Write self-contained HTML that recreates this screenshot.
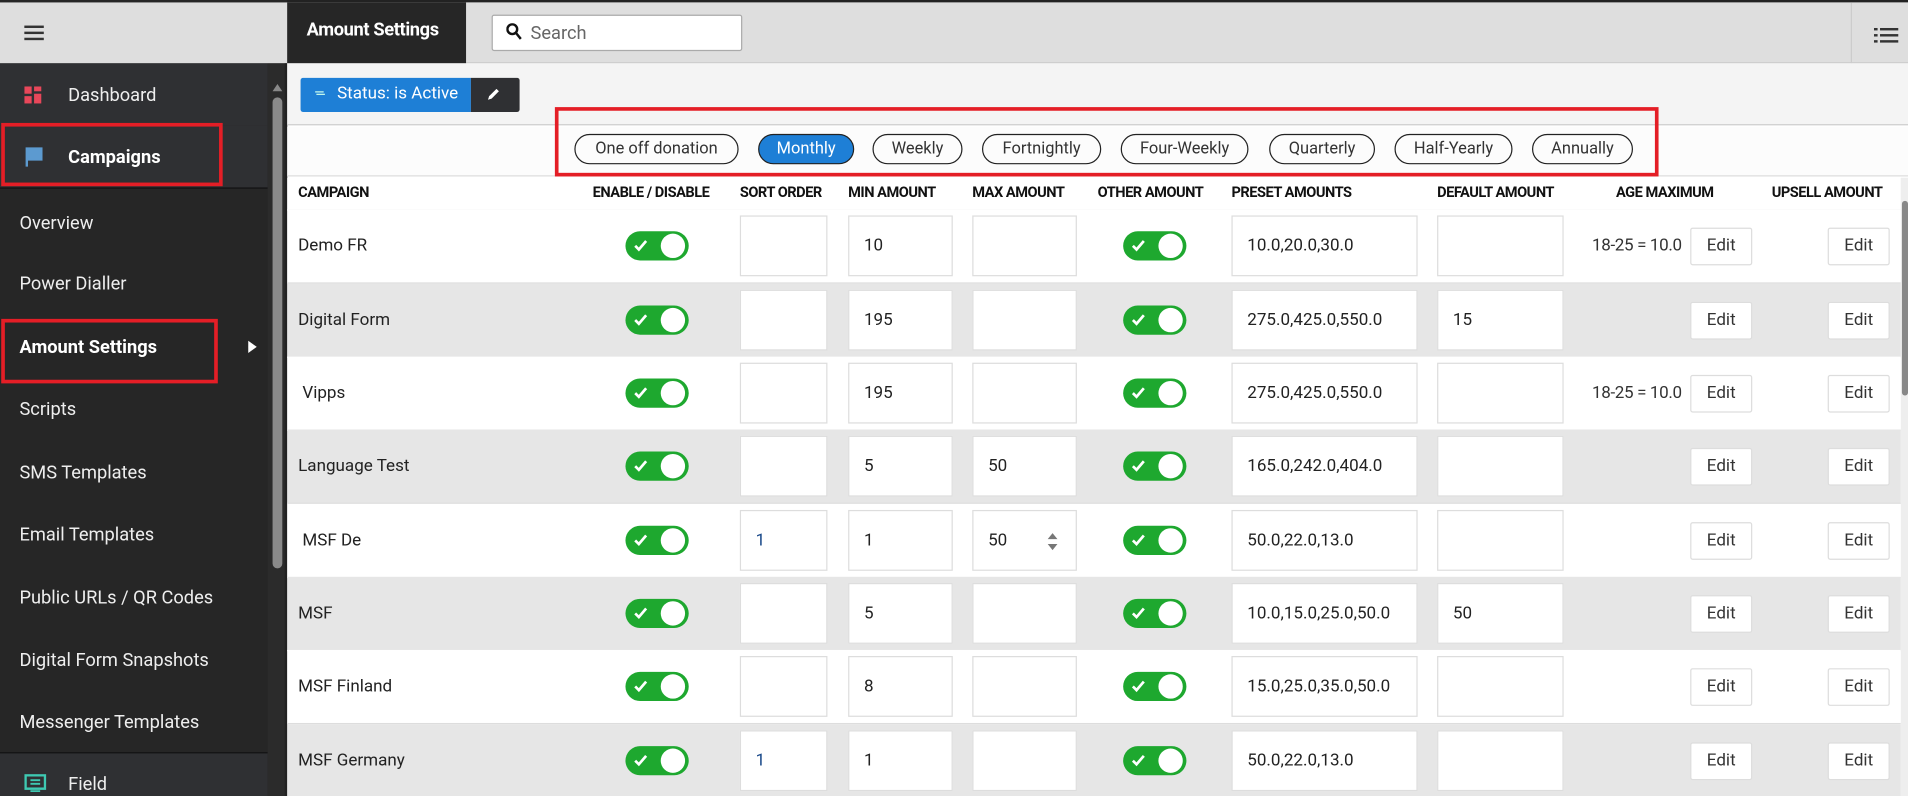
<!DOCTYPE html>
<html><head><meta charset="utf-8"><style>
*{box-sizing:border-box;margin:0;padding:0}
html,body{width:1908px;height:796px;overflow:hidden;background:#fff}
#w{position:absolute;left:0;top:0;width:1568px;height:654px;transform:scale(1.21684,1.2171);transform-origin:0 0;font-family:"Roboto","Liberation Sans",sans-serif;overflow:hidden}
.a{position:absolute}
.side{left:0;top:0;width:236px;height:654px;background:#262626}
.si{position:absolute;left:0;width:220px;color:#eee;font-size:15px;padding-left:16px;display:flex;align-items:center;height:51px}
.hd{font-size:12px;font-weight:bold;color:#111;top:151px;position:absolute;letter-spacing:-0.4px}
.row{position:absolute;left:236px;width:1326px;height:61px;border-bottom:1px solid #ddd}
.row>*{position:absolute}
.nm{left:9px;top:0;line-height:60px;font-size:14px;color:#222}
.tg{width:52px;height:24px;top:18px;background:#1ea82f;border-radius:12px}
.tg:after{content:"";position:absolute;right:3px;top:2px;width:20px;height:20px;border-radius:50%;background:#fff}
.tg svg{position:absolute;left:7px;top:6px}
.in{top:5px;height:50px;background:#fff;border:1px solid #ddd;font-size:14px;color:#222;padding-left:12px;line-height:48px}
.ed{top:15px;height:31px;width:51px;background:#fff;border:1px solid #ddd;border-radius:2px;font-size:14px;color:#333;text-align:center;line-height:29px}
.ag{right:180px;top:0;line-height:60px;font-size:14px;color:#333;letter-spacing:-0.3px}
.pill{position:absolute;top:110px;height:25px;border:1px solid #222;border-radius:13px;font-size:13.5px;color:#333;line-height:23px;text-align:center}
</style></head><body><div id="w">
<div class="a" style="left:0;top:0;width:1568px;height:2px;background:#222"></div>
<div class="a side"></div>
<div class="a" style="left:0;top:2px;width:236px;height:50px;background:#dedede"></div>
<div class="a" style="left:20px;top:21px;width:16px;height:2px;background:#333;box-shadow:0 5px 0 #333,0 10px 0 #333"></div>
<div class="si" style="top:52px;background:#2f3033"><svg class="a" style="left:20px;top:19px" width="14" height="14"><rect x="0" y="0" width="6" height="6" fill="#e8475a"/><rect x="8" y="0" width="6" height="4" fill="#e8475a"/><rect x="0" y="8" width="6" height="6" fill="#e8475a"/><rect x="8" y="6" width="6" height="8" fill="#e8475a"/></svg><span style="margin-left:40px">Dashboard</span></div>
<div class="si" style="top:103px;height:52px;background:#2f3033;border-bottom:1px solid #111"><svg class="a" style="left:21px;top:18px" width="14" height="16"><path d="M1 0v16M1 1h12v9H1" fill="#5c9ad0" stroke="#5c9ad0" stroke-width="2"/></svg><b style="margin-left:40px;color:#fff">Campaigns</b></div>
<div class="si" style="top:157px">Overview</div>
<div class="si" style="top:207px">Power Dialler</div>
<div class="si" style="top:259px;font-weight:bold;color:#fff">Amount Settings</div>
<div class="a" style="left:204px;top:280px;border-left:7px solid #fff;border-top:5px solid transparent;border-bottom:5px solid transparent"></div>
<div class="si" style="top:310px">Scripts</div>
<div class="si" style="top:362px">SMS Templates</div>
<div class="si" style="top:413px">Email Templates</div>
<div class="si" style="top:465px">Public URLs / QR Codes</div>
<div class="si" style="top:516px">Digital Form Snapshots</div>
<div class="si" style="top:567px">Messenger Templates</div>
<div class="si" style="top:618px;height:36px;background:#2f3033;border-top:1px solid #111;align-items:flex-start;padding-top:16px"><svg class="a" style="left:20px;top:17px" width="18" height="16"><rect x="1" y="1" width="16" height="11" fill="none" stroke="#3ec9b2" stroke-width="2"/><path d="M5 5h8M5 8h8M5 14h8" stroke="#3ec9b2" stroke-width="1.5"/></svg><span style="margin-left:40px">Field</span></div>
<div class="a" style="left:220px;top:52px;width:16px;height:602px;background:#2b2b2b"></div>
<div class="a" style="left:224px;top:69px;border-bottom:6px solid #888;border-left:4px solid transparent;border-right:4px solid transparent"></div>
<div class="a" style="left:224px;top:80px;width:8px;height:387px;background:#8a8a8a;border-radius:4px"></div>
<div class="a" style="left:234px;top:52px;width:2px;height:602px;background:#222"></div>
<div class="a" style="left:1px;top:101px;width:182px;height:52px;border:3px solid #e41e26"></div>
<div class="a" style="left:1px;top:262px;width:178px;height:53px;border:3px solid #e41e26"></div>
<!-- header -->
<div class="a" style="left:236px;top:2px;width:1332px;height:50px;background:#dedede;border-bottom:1px solid #ccc"></div>
<div class="a" style="left:236px;top:2px;width:147px;height:50px;background:#262626;color:#fff;font-weight:bold;font-size:15px;line-height:44px;padding-left:16px;letter-spacing:-0.3px">Amount Settings</div>
<div class="a" style="left:404px;top:12px;width:206px;height:30px;background:#fff;border:1px solid #aaa;border-radius:2px;font-size:15px;color:#666;line-height:28px;padding-left:31px">Search</div>
<svg class="a" style="left:416px;top:19px" width="13" height="14"><circle cx="5" cy="5" r="4" fill="none" stroke="#111" stroke-width="2"/><path d="M8 8l4 5" stroke="#111" stroke-width="2"/></svg>
<div class="a" style="left:1521px;top:2px;width:1px;height:50px;background:#ccc"></div>
<svg class="a" style="left:1540px;top:22px" width="22" height="14"><g fill="#333"><rect x="0" y="1" width="3" height="2"/><rect x="5" y="1" width="15" height="2"/><rect x="0" y="6" width="3" height="2"/><rect x="5" y="6" width="15" height="2"/><rect x="0" y="11" width="3" height="2"/><rect x="5" y="11" width="15" height="2"/></g></svg>
<div class="a" style="left:236px;top:52px;width:1332px;height:51px;background:#f4f4f4;border-bottom:1px solid #ccc"></div>
<div class="a" style="left:247px;top:64px;width:140px;height:28px;background:#1e7fd6;border-radius:2px 0 0 2px;color:#fff;font-size:14px;line-height:26px;padding-left:30px">Status: is Active</div>
<div class="a" style="left:259px;top:75px;width:7px;height:1px;background:#cfe;box-shadow:1px 2px 0 #cfe"></div>
<div class="a" style="left:387px;top:64px;width:40px;height:28px;background:#2f3033;border-radius:0 2px 2px 0"></div>
<svg class="a" style="left:400px;top:71px" width="12" height="12"><path d="M1 11l1-3 6-6 2 2-6 6z" fill="#fff"/></svg>
<div class="a" style="left:236px;top:104px;width:1332px;height:41px;background:#fcfcfc;border-bottom:1px solid #ddd"></div>
<div class="pill" style="left:472px;width:135px">One off donation</div>
<div class="pill" style="left:623px;width:79px;background:#1e7fd6;color:#fff">Monthly</div>
<div class="pill" style="left:717px;width:74px">Weekly</div>
<div class="pill" style="left:807px;width:98px">Fortnightly</div>
<div class="pill" style="left:921px;width:105px">Four-Weekly</div>
<div class="pill" style="left:1043px;width:87px">Quarterly</div>
<div class="pill" style="left:1146px;width:97px">Half-Yearly</div>
<div class="pill" style="left:1259px;width:83px">Annually</div>
<div class="a" style="left:456px;top:88px;width:907px;height:57px;border:3px solid #e41e26"></div>
<!-- table header -->
<div class="a" style="left:236px;top:146px;width:1326px;height:27px;background:#fff;border-bottom:1px solid #ddd"></div>
<div class="hd" style="left:245px">CAMPAIGN</div>
<div class="hd" style="left:487px">ENABLE / DISABLE</div>
<div class="hd" style="left:608px">SORT ORDER</div>
<div class="hd" style="left:697px">MIN AMOUNT</div>
<div class="hd" style="left:799px">MAX AMOUNT</div>
<div class="hd" style="left:902px">OTHER AMOUNT</div>
<div class="hd" style="left:1012px">PRESET AMOUNTS</div>
<div class="hd" style="left:1181px">DEFAULT AMOUNT</div>
<div class="hd" style="left:1328px">AGE MAXIMUM</div>
<div class="hd" style="left:1456px">UPSELL AMOUNT</div>
<div class="a" style="left:1562px;top:146px;width:6px;height:508px;background:#eee"></div>
<div class="a" style="left:1563px;top:165px;width:5px;height:160px;background:#888;border-radius:3px"></div>
<svg width="0" height="0" style="position:absolute"><defs><path id="ck" d="M1 6l3 3 6-7" fill="none" stroke="#fff" stroke-width="2.2"/></defs></svg>
<div class="row" style="top:172px;background:#fff"><div class="nm">Demo FR</div><div class="tg" style="left:278px"><svg width="12" height="12"><use href="#ck"/></svg></div><div class="in" style="left:372px;width:72px"></div><div class="in" style="left:461px;width:86px">10</div><div class="in" style="left:563px;width:86px"></div><div class="tg" style="left:687px"><svg width="12" height="12"><use href="#ck"/></svg></div><div class="in" style="left:776px;width:153px">10.0,20.0,30.0</div><div class="in" style="left:945px;width:104px"></div><div class="ag">18-25 = 10.0</div><div class="ed" style="left:1153px">Edit</div><div class="ed" style="left:1266px">Edit</div></div>
<div class="row" style="top:233px;background:#e6e6e6"><div class="nm">Digital Form</div><div class="tg" style="left:278px"><svg width="12" height="12"><use href="#ck"/></svg></div><div class="in" style="left:372px;width:72px"></div><div class="in" style="left:461px;width:86px">195</div><div class="in" style="left:563px;width:86px"></div><div class="tg" style="left:687px"><svg width="12" height="12"><use href="#ck"/></svg></div><div class="in" style="left:776px;width:153px">275.0,425.0,550.0</div><div class="in" style="left:945px;width:104px">15</div><div class="ed" style="left:1153px">Edit</div><div class="ed" style="left:1266px">Edit</div></div>
<div class="row" style="top:293px;background:#fff"><div class="nm">&nbsp;Vipps</div><div class="tg" style="left:278px"><svg width="12" height="12"><use href="#ck"/></svg></div><div class="in" style="left:372px;width:72px"></div><div class="in" style="left:461px;width:86px">195</div><div class="in" style="left:563px;width:86px"></div><div class="tg" style="left:687px"><svg width="12" height="12"><use href="#ck"/></svg></div><div class="in" style="left:776px;width:153px">275.0,425.0,550.0</div><div class="in" style="left:945px;width:104px"></div><div class="ag">18-25 = 10.0</div><div class="ed" style="left:1153px">Edit</div><div class="ed" style="left:1266px">Edit</div></div>
<div class="row" style="top:353px;background:#e6e6e6"><div class="nm">Language Test</div><div class="tg" style="left:278px"><svg width="12" height="12"><use href="#ck"/></svg></div><div class="in" style="left:372px;width:72px"></div><div class="in" style="left:461px;width:86px">5</div><div class="in" style="left:563px;width:86px">50</div><div class="tg" style="left:687px"><svg width="12" height="12"><use href="#ck"/></svg></div><div class="in" style="left:776px;width:153px">165.0,242.0,404.0</div><div class="in" style="left:945px;width:104px"></div><div class="ed" style="left:1153px">Edit</div><div class="ed" style="left:1266px">Edit</div></div>
<div class="row" style="top:414px;background:#fff"><div class="nm">&nbsp;MSF De</div><div class="tg" style="left:278px"><svg width="12" height="12"><use href="#ck"/></svg></div><div class="in" style="left:372px;width:72px;color:#1a4a8a">1</div><div class="in" style="left:461px;width:86px">1</div><div class="in" style="left:563px;width:86px">50<svg style="position:absolute;left:60px;top:17px" width="10" height="16"><path d="M1 6l4-5 4 5zM1 10l4 5 4-5z" fill="#777"/></svg></div><div class="tg" style="left:687px"><svg width="12" height="12"><use href="#ck"/></svg></div><div class="in" style="left:776px;width:153px">50.0,22.0,13.0</div><div class="in" style="left:945px;width:104px"></div><div class="ed" style="left:1153px">Edit</div><div class="ed" style="left:1266px">Edit</div></div>
<div class="row" style="top:474px;background:#e6e6e6"><div class="nm">MSF</div><div class="tg" style="left:278px"><svg width="12" height="12"><use href="#ck"/></svg></div><div class="in" style="left:372px;width:72px"></div><div class="in" style="left:461px;width:86px">5</div><div class="in" style="left:563px;width:86px"></div><div class="tg" style="left:687px"><svg width="12" height="12"><use href="#ck"/></svg></div><div class="in" style="left:776px;width:153px">10.0,15.0,25.0,50.0</div><div class="in" style="left:945px;width:104px">50</div><div class="ed" style="left:1153px">Edit</div><div class="ed" style="left:1266px">Edit</div></div>
<div class="row" style="top:534px;background:#fff"><div class="nm">MSF Finland</div><div class="tg" style="left:278px"><svg width="12" height="12"><use href="#ck"/></svg></div><div class="in" style="left:372px;width:72px"></div><div class="in" style="left:461px;width:86px">8</div><div class="in" style="left:563px;width:86px"></div><div class="tg" style="left:687px"><svg width="12" height="12"><use href="#ck"/></svg></div><div class="in" style="left:776px;width:153px">15.0,25.0,35.0,50.0</div><div class="in" style="left:945px;width:104px"></div><div class="ed" style="left:1153px">Edit</div><div class="ed" style="left:1266px">Edit</div></div>
<div class="row" style="top:595px;background:#e6e6e6"><div class="nm">MSF Germany</div><div class="tg" style="left:278px"><svg width="12" height="12"><use href="#ck"/></svg></div><div class="in" style="left:372px;width:72px;color:#1a4a8a">1</div><div class="in" style="left:461px;width:86px">1</div><div class="in" style="left:563px;width:86px"></div><div class="tg" style="left:687px"><svg width="12" height="12"><use href="#ck"/></svg></div><div class="in" style="left:776px;width:153px">50.0,22.0,13.0</div><div class="in" style="left:945px;width:104px"></div><div class="ed" style="left:1153px">Edit</div><div class="ed" style="left:1266px">Edit</div></div>
</div></body></html>
